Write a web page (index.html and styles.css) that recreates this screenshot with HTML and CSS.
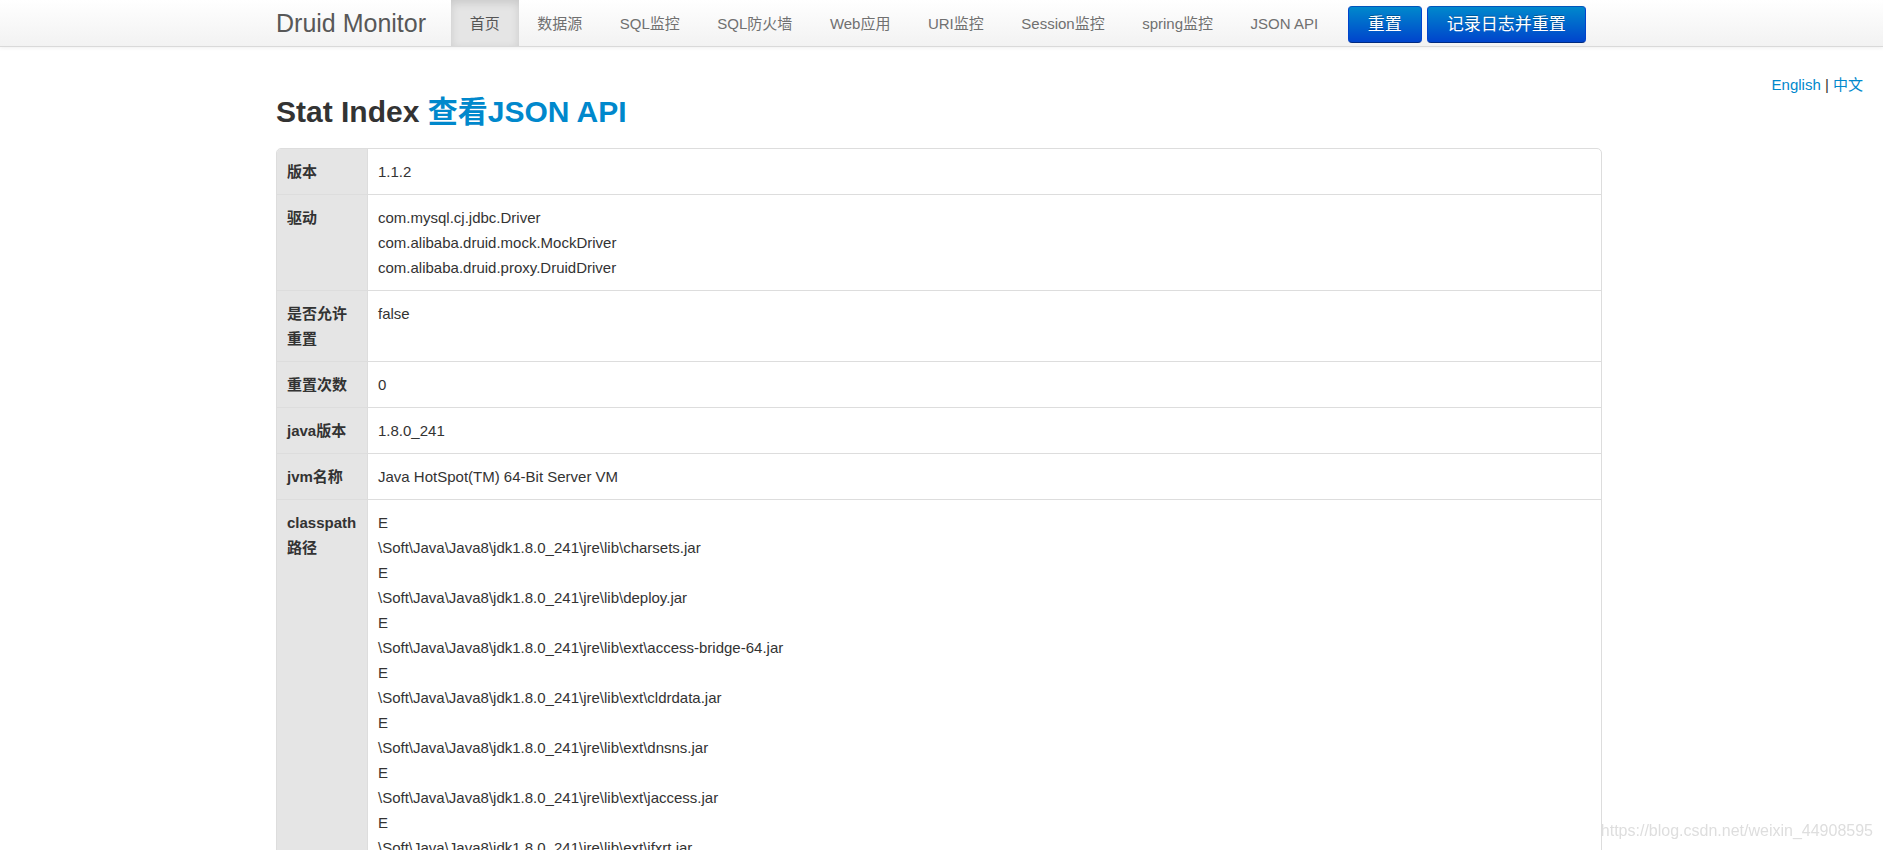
FILE: index.html
```html
<!DOCTYPE html>
<html lang="zh-CN">
<head>
<meta charset="utf-8">
<title>Druid Stat Index</title>
<link rel="stylesheet" href="styles.css">
</head>
<body>
<header class="navbar">
  <div class="navbar-inner">
    <a class="brand" href="#">Druid Monitor</a>
    <nav class="nav">
      <a class="nav-item active" href="#">首页</a>
      <a class="nav-item" href="#">数据源</a>
      <a class="nav-item" href="#">SQL监控</a>
      <a class="nav-item" href="#">SQL防火墙</a>
      <a class="nav-item" href="#">Web应用</a>
      <a class="nav-item" href="#">URI监控</a>
      <a class="nav-item" href="#">Session监控</a>
      <a class="nav-item" href="#">spring监控</a>
      <a class="nav-item" href="#">JSON API</a>
    </nav>
    <div class="actions">
      <a class="btn" href="#">重置</a>
      <a class="btn" href="#">记录日志并重置</a>
    </div>
  </div>
</header>

<div class="lang"><a href="#">English</a> | <a href="#">中文</a></div>

<main class="container">
  <h1 class="title">Stat Index <a href="#">查看JSON API</a></h1>
  <table class="stat-table">
    <tbody>
      <tr><th>版本</th><td>1.1.2</td></tr>
      <tr><th>驱动</th><td>
        <div>com.mysql.cj.jdbc.Driver</div>
        <div>com.alibaba.druid.mock.MockDriver</div>
        <div>com.alibaba.druid.proxy.DruidDriver</div>
      </td></tr>
      <tr><th>是否允许重置</th><td>false</td></tr>
      <tr><th>重置次数</th><td>0</td></tr>
      <tr><th>java版本</th><td>1.8.0_241</td></tr>
      <tr><th>jvm名称</th><td>Java HotSpot(TM) 64-Bit Server VM</td></tr>
      <tr><th>classpath路径</th><td>
        <div>E</div>
        <div>\Soft\Java\Java8\jdk1.8.0_241\jre\lib\charsets.jar</div>
        <div>E</div>
        <div>\Soft\Java\Java8\jdk1.8.0_241\jre\lib\deploy.jar</div>
        <div>E</div>
        <div>\Soft\Java\Java8\jdk1.8.0_241\jre\lib\ext\access-bridge-64.jar</div>
        <div>E</div>
        <div>\Soft\Java\Java8\jdk1.8.0_241\jre\lib\ext\cldrdata.jar</div>
        <div>E</div>
        <div>\Soft\Java\Java8\jdk1.8.0_241\jre\lib\ext\dnsns.jar</div>
        <div>E</div>
        <div>\Soft\Java\Java8\jdk1.8.0_241\jre\lib\ext\jaccess.jar</div>
        <div>E</div>
        <div>\Soft\Java\Java8\jdk1.8.0_241\jre\lib\ext\jfxrt.jar</div>
        <div>E</div>
        <div>\Soft\Java\Java8\jdk1.8.0_241\jre\lib\ext\localedata.jar</div>
        <div>E</div>
        <div>\Soft\Java\Java8\jdk1.8.0_241\jre\lib\ext\nashorn.jar</div>
      </td></tr>
    </tbody>
  </table>
</main>

<div class="watermark">https://blog.csdn.net/weixin_44908595</div>
</body>
</html>
```

FILE: styles.css
```css
html, body {
  margin: 0;
  padding: 0;
}

body {
  font-family: "Liberation Sans", Arial, "Noto Sans CJK SC", sans-serif;
  font-size: 15px;
  line-height: 25px;
  color: #333333;
  background: #ffffff;
}

a {
  color: #0088cc;
  text-decoration: none;
}

/* ---------- navbar ---------- */
.navbar {
  height: 46px;
  background: linear-gradient(to bottom, #ffffff, #f2f2f2);
  border-bottom: 1px solid #d9d9d9;
  box-shadow: 0 1px 4px rgba(0, 0, 0, 0.065);
}

.navbar-inner {
  display: flex;
  align-items: stretch;
  height: 46px;
  margin-left: 276px;
}

.brand {
  display: flex;
  align-items: center;
  padding: 0 25px 0 0;
  font-size: 25px;
  color: #585858;
}

.nav {
  display: flex;
  align-items: stretch;
}

.nav-item {
  display: flex;
  align-items: center;
  padding: 0 18.75px;
  color: #707070;
  font-size: 15px;
}

.nav-item.active {
  color: #555555;
  background: #e5e5e5;
  box-shadow: inset 0 3px 8px rgba(0, 0, 0, 0.125);
}

.actions {
  display: flex;
  align-items: flex-start;
  gap: 5px;
  margin-left: 11px;
  padding-top: 6px;
}

.btn {
  display: flex;
  align-items: center;
  height: 35px;
  padding: 0 19px;
  font-size: 17px;
  color: #ffffff;
  background: linear-gradient(to bottom, #0088cc, #0044cc);
  border: 1px solid #0044aa;
  border-color: #0055bb #0044cc #002a80;
  border-radius: 4px;
  text-shadow: 0 -1px 0 rgba(0, 0, 0, 0.25);
}

/* ---------- language switch ---------- */
.lang {
  position: absolute;
  top: 75px;
  right: 20px;
  font-size: 15px;
  line-height: 20px;
  color: #333333;
}

/* ---------- main ---------- */
.container {
  width: 1326px;
  margin-left: 276px;
}

.title {
  margin: 45px 0 16px 0;
  font-size: 30px;
  line-height: 40px;
  font-weight: bold;
  color: #333333;
}

.stat-table {
  width: 1326px;
  border-collapse: separate;
  border-spacing: 0;
  border: 1px solid #dddddd;
  border-radius: 5px;
}

.stat-table th,
.stat-table td {
  padding: 10px;
  vertical-align: top;
  text-align: left;
  border-top: 1px solid #dddddd;
}

.stat-table tr:first-child th,
.stat-table tr:first-child td {
  border-top: 0;
}

.stat-table th {
  width: 70px;
  font-weight: bold;
  background: #e5e5e5;
}

.stat-table tr:first-child th {
  border-top-left-radius: 4px;
}

.stat-table td {
  border-left: 1px solid #dddddd;
}

/* ---------- watermark ---------- */
.watermark {
  position: fixed;
  right: 10px;
  bottom: 9px;
  font-size: 16px;
  line-height: 20px;
  color: #dedede;
}
```
